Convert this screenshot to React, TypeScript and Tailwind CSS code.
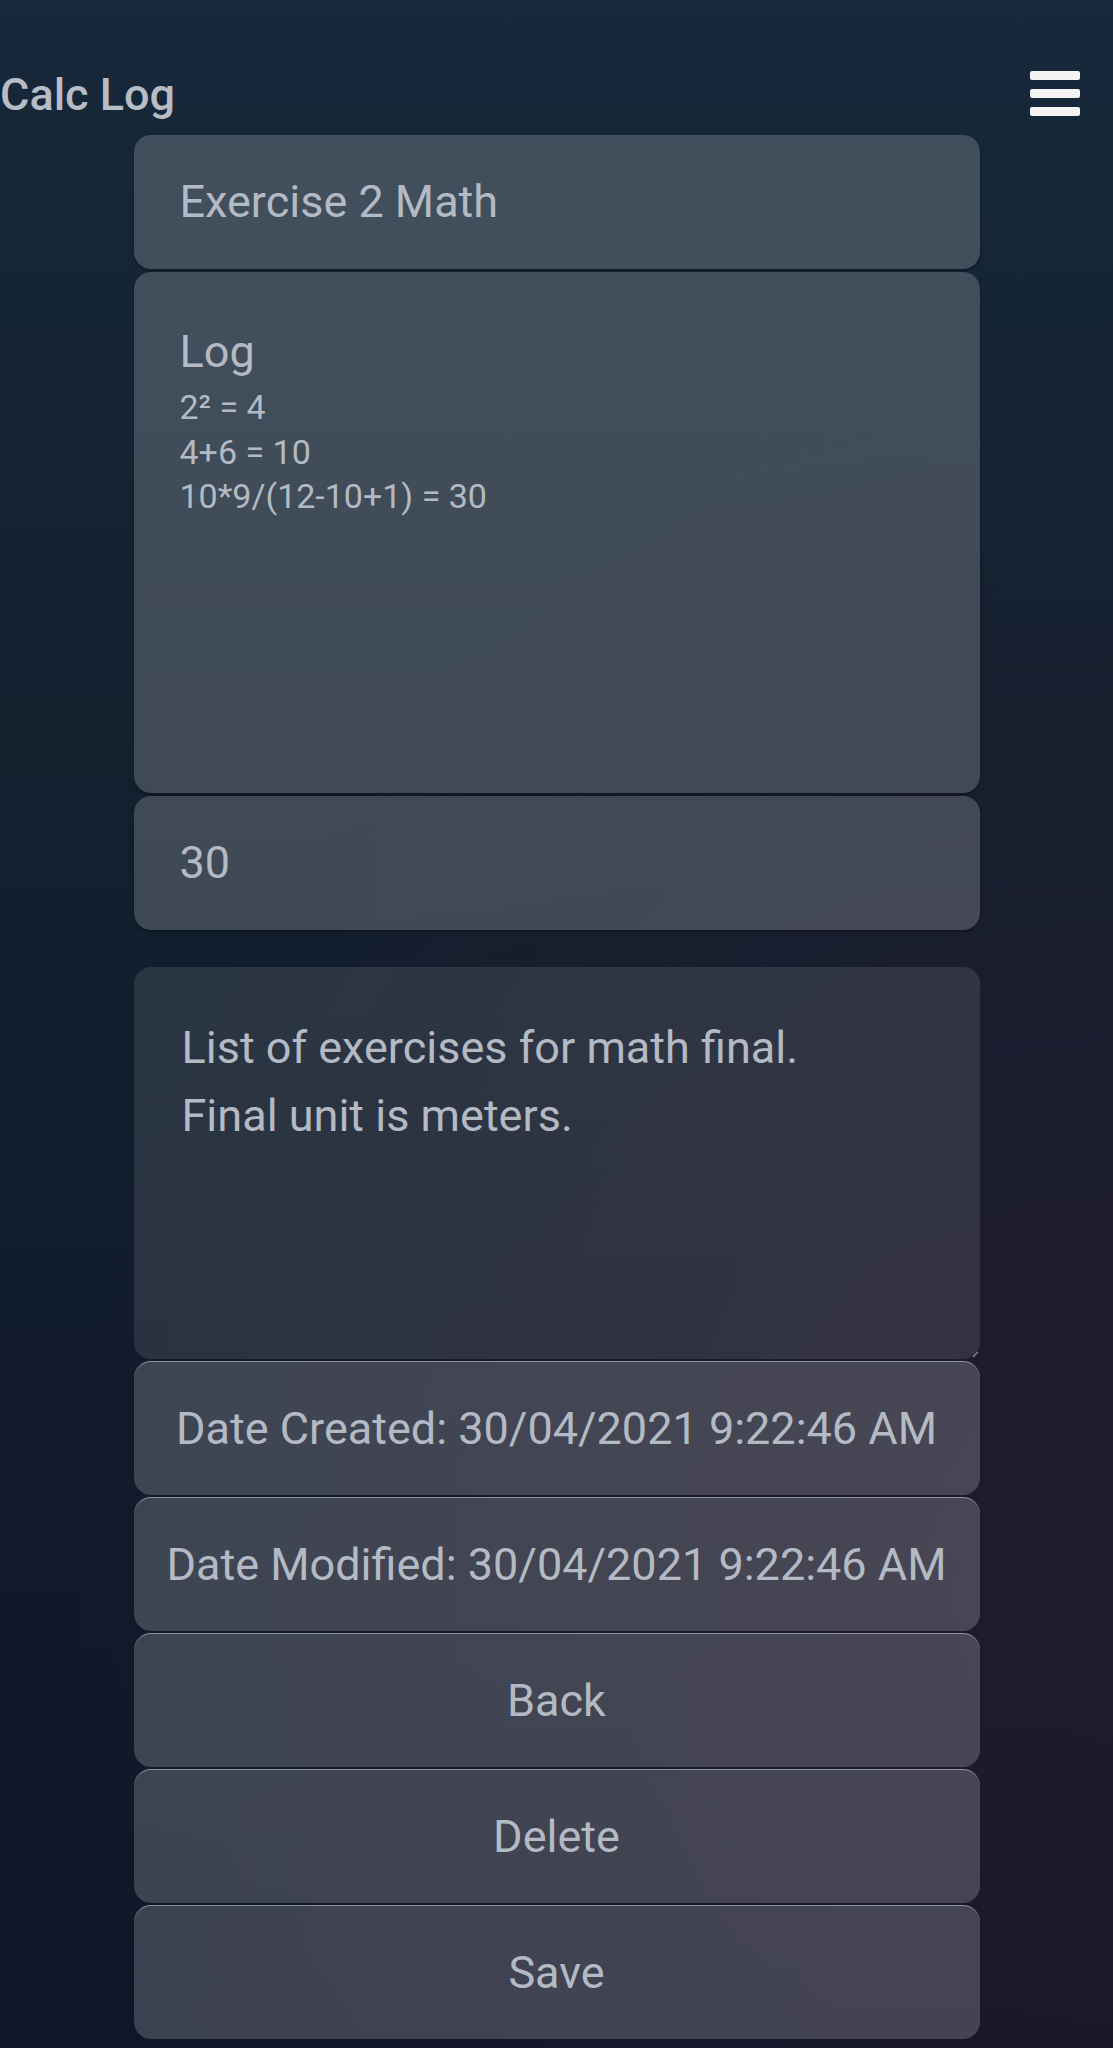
import React from "react";

const upper =
  "w-[846px] rounded-[17px] bg-white/[0.19] shadow-[0_2px_3px_rgba(0,0,0,0.35)]";
const lower =
  "w-[846px] h-[134px] rounded-[17px] bg-white/[0.19] border-t-[1.5px] border-[#8d94a2] flex items-center justify-center text-[45px] leading-[54px] whitespace-nowrap";

export default function App() {
  return (
    <div
      className="min-h-[2048px] w-full text-[#b4bac3] bg-[radial-gradient(ellipse_95%_60%_at_100%_78%,rgba(44,28,48,0.6),transparent),linear-gradient(180deg,#16283a_0%,#13212f_35%,#111c2c_60%,#0e1628_100%)]"
      style={{ fontFamily: "Roboto, 'Noto Sans', sans-serif" }}
    >
      <header className="flex items-start justify-between h-[135px] pt-[68px] pl-0 pr-[33px]">
        <h1 className="text-[45px] leading-[54px] font-medium text-[#b7bcc5]">Calc Log</h1>
        <button className="mt-[3px] flex flex-col gap-[9.5px] w-[50px]" aria-label="menu">
          <span className="block h-[8.5px] w-[50px] rounded-[2px] bg-[#f4f4f4]" />
          <span className="block h-[8.5px] w-[50px] rounded-[2px] bg-[#f4f4f4]" />
          <span className="block h-[8.5px] w-[50px] rounded-[2px] bg-[#f4f4f4]" />
        </button>
      </header>

      <main className="flex flex-col items-center">
        <div className={`${upper} h-[134px] flex items-center pl-[46px] text-[45px] leading-[54px]`}>
          Exercise 2 Math
        </div>
        <div className={`${upper} h-[521px] mt-[3px] pl-[46px] pt-[53px]`}>
          <div className="text-[45px] leading-[54px]">Log</div>
          <div className="mt-[6px] text-[34px] leading-[44.5px]">
            <div>2² = 4</div>
            <div>4+6 = 10</div>
            <div>10*9/(12-10+1) = 30</div>
          </div>
        </div>
        <div className={`${upper} h-[134px] mt-[3px] flex items-center pl-[46px] text-[45px] leading-[54px]`}>
          30
        </div>

        <div className="relative w-[846px] h-[392px] mt-[37px] rounded-[17px] bg-white/[0.10] pl-[48px] pt-[47px] text-[45px] leading-[68px]">
          <div>List of exercises for math final.</div>
          <div>Final unit is meters.</div>
          <svg
            className="absolute right-[1px] bottom-[1px]"
            width="7"
            height="7"
            viewBox="0 0 7 7"
          >
            <path d="M6 1 L1 6" stroke="#8a8f99" strokeWidth="1.2" />
          </svg>
        </div>

        <div className="flex flex-col gap-[2px] mt-[2px]">
          <div className={lower}>Date Created: 30/04/2021 9:22:46 AM</div>
          <div className={lower}>Date Modified: 30/04/2021 9:22:46 AM</div>
          <button className={lower}>Back</button>
          <button className={lower}>Delete</button>
          <button className={lower}>Save</button>
        </div>
      </main>
    </div>
  );
}
